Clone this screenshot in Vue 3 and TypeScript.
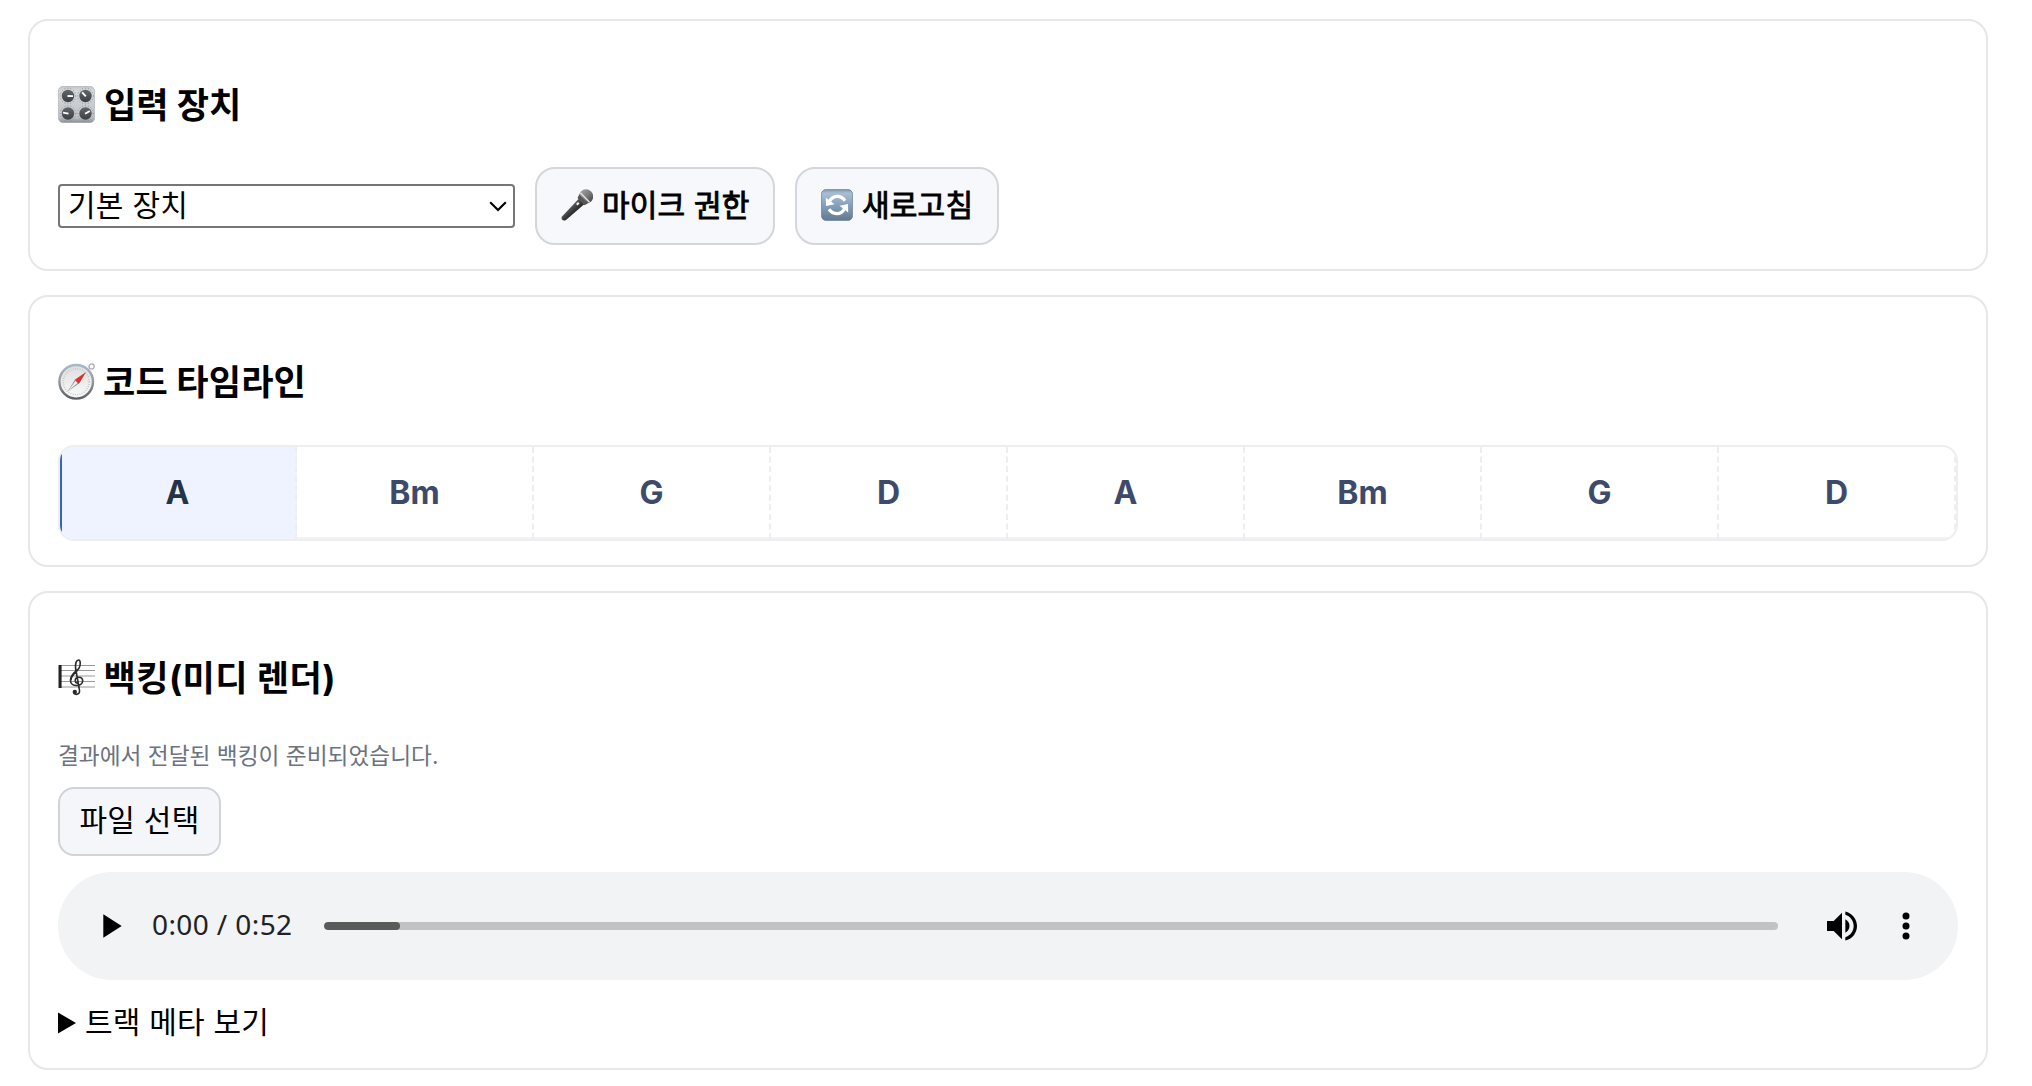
<script setup lang="ts">
import { ref } from 'vue'

const chords = ref<string[]>(['A', 'Bm', 'G', 'D', 'A', 'Bm', 'G', 'D'])
const activeIndex = ref(0)

interface Knob { x: number; y: number; angle: number }
const knobs: Knob[] = [
  { x: 10, y: 10, angle: 2 },
  { x: 27.5, y: 10, angle: 228 },
  { x: 10, y: 27.5, angle: 190 },
  { x: 27.5, y: 27.5, angle: -30 },
]
const staffLines = [6.5, 11.5, 17, 22.5, 28]
</script>

<template>
  <main class="page">
    <section class="card device-card">
      <h3 class="title">
        <svg class="emoji" viewBox="0 0 37 37" aria-hidden="true">
          <defs>
            <linearGradient id="panel" x1="0" y1="0" x2="0" y2="1">
              <stop offset="0" stop-color="#c3c6c9" />
              <stop offset=".12" stop-color="#d5d8da" />
              <stop offset=".85" stop-color="#bfc3c7" />
              <stop offset="1" stop-color="#8b8f94" />
            </linearGradient>
            <linearGradient id="dial" x1="0" y1="0" x2="0" y2="1">
              <stop offset="0" stop-color="#62666b" />
              <stop offset="1" stop-color="#3c4045" />
            </linearGradient>
          </defs>
          <rect x=".3" y=".3" width="36.4" height="36.4" rx="5" fill="url(#panel)" stroke="#a6a9ad" stroke-width=".6" />
          <g v-for="(k, i) in knobs" :key="i">
            <circle :cx="k.x" :cy="k.y" r="7.8" fill="none" stroke="#80858a" stroke-width="1" stroke-dasharray=".8 2.2" />
            <circle :cx="k.x" :cy="k.y" r="6.2" fill="url(#dial)" />
            <path d="M-.5 0H5" stroke="#fff" stroke-width="1.9" :transform="`translate(${k.x} ${k.y}) rotate(${k.angle})`" />
          </g>
        </svg>
        <span>입력 장치</span>
      </h3>
      <div class="controls">
        <div class="select">
          <span>기본 장치</span>
          <svg class="chevron" viewBox="0 0 18 11" aria-hidden="true"><path d="M1.2 1.2 9 9l7.8-7.8" fill="none" stroke="#000" stroke-width="2.1" /></svg>
        </div>
        <button class="btn mic-btn">
          <svg class="emoji-sm" viewBox="0 0 32 32" aria-hidden="true">
            <defs>
              <linearGradient id="handle" x1="0" y1="0" x2="1" y2="1">
                <stop offset=".25" stop-color="#777" />
                <stop offset=".55" stop-color="#333" />
                <stop offset="1" stop-color="#111" />
              </linearGradient>
              <linearGradient id="grille" x1="0" y1="0" x2="1" y2="1">
                <stop offset="0" stop-color="#aaa" />
                <stop offset=".55" stop-color="#777" />
                <stop offset="1" stop-color="#333" />
              </linearGradient>
            </defs>
            <path d="M18 9.5 23.5 15 5 31Q2.5 32.5.8 30.2.2 29 1 27.5Z" fill="url(#handle)" />
            <circle cx="25" cy="7.5" r="7.2" fill="url(#grille)" />
            <path d="m18.2 5.5 8.5 9-3.2 1.8-7-7.2Z" fill="#555" />
            <path d="m19.3 3.8 9.2 9.5" stroke="#ddd" stroke-width="1.6" />
            <path d="m15.8 15.8 2-2" stroke="#eee" stroke-width="2.2" />
          </svg>
          <span>마이크 권한</span>
        </button>
        <button class="btn refresh-btn">
          <svg class="emoji-sm" viewBox="0 0 32 32" aria-hidden="true">
            <defs>
              <linearGradient id="tile" x1="0" y1="0" x2="0" y2="1">
                <stop offset="0" stop-color="#7d93ab" />
                <stop offset=".12" stop-color="#a9bfd5" />
                <stop offset=".5" stop-color="#86a0bc" />
                <stop offset="1" stop-color="#62788f" />
              </linearGradient>
            </defs>
            <rect x=".4" y=".4" width="31.2" height="31.2" rx="5" fill="url(#tile)" stroke="#6f8399" stroke-width=".8" />
            <g fill="none" stroke="#fff" stroke-width="3.2">
              <path d="M8.2 12.8Q11 7.3 16.4 7.4q4.6.1 7.6 4.3" />
              <path d="M23.8 19.2Q21 24.7 15.6 24.6q-4.6-.1-7.6-4.3" />
            </g>
            <path d="M4.8 8.5 5 17l8.5-1.8ZM27.2 23.5 27 15l-8.5 1.8Z" fill="#fff" />
          </svg>
          <span>새로고침</span>
        </button>
      </div>
    </section>

    <section class="card timeline-card">
      <h3 class="title">
        <svg class="emoji" viewBox="0 0 37 37" aria-hidden="true">
          <defs>
            <linearGradient id="ring" x1="0" y1="0" x2="0" y2="1">
              <stop offset="0" stop-color="#a9b8c8" />
              <stop offset=".5" stop-color="#92979c" />
              <stop offset="1" stop-color="#5b6066" />
            </linearGradient>
            <linearGradient id="face" x1="0" y1="0" x2="0" y2="1">
              <stop offset="0" stop-color="#dedede" />
              <stop offset="1" stop-color="#fafafa" />
            </linearGradient>
          </defs>
          <circle cx="33.6" cy="3.4" r="2.6" fill="none" stroke="#a3a8b2" stroke-width="1.2" />
          <circle cx="18.2" cy="18.8" r="16.8" fill="url(#face)" stroke="url(#ring)" stroke-width="2.4" />
          <circle cx="18.2" cy="18.8" r="13" fill="none" stroke="#bbb" stroke-width="1.6" stroke-dasharray=".7 1.6" />
          <path d="M9.5 28.5 17 16.5l4 4Z" fill="#999" />
          <path d="m10 28 7.5-10 2 2Z" fill="#eee" />
          <path d="M28 9 16.8 16.8l4 4Z" fill="#ee2a2c" />
          <path d="M28 9 19.8 19.8l1 1Z" fill="#a9474b" />
        </svg>
        <span>코드 타임라인</span>
      </h3>
      <div class="timeline">
        <div v-for="(chord, i) in chords" :key="i" class="chord" :class="{ active: i === activeIndex }">{{ chord }}</div>
      </div>
    </section>

    <section class="card backing-card">
      <h3 class="title">
        <svg class="emoji" viewBox="0 0 37 37" aria-hidden="true">
          <path v-for="y in staffLines" :key="y" :d="`M1 ${y}H37`" stroke="#999" stroke-width="1" />
          <path d="M2.2 6v23" stroke="#222" stroke-width="2.8" />
          <path d="M.5 6v23" stroke="#777" stroke-width=".7" />
          <g fill="none" stroke="#2b2b2b" stroke-linecap="round">
            <path d="M20.9 28 17.6 9.5C17 4.5 18.5 1 20.5 1c2.3 0 2.3 5.5.3 8.5-2.5 3.8-8.3 7-8.3 12.2 0 6.5 12.2 6.3 12.2.3 0-5-7.5-5-7.5-.5 0 1.5.8 2.4 2 2.8" stroke-width="1.6" />
            <path d="M12.8 20.5c.1-4 4-7.2 6.2-9.2" stroke-width="2" />
            <path d="M20.9 28 21.6 32c0 3.8-5.1 4.5-5.6 1.8" stroke-width="1.5" />
          </g>
          <circle cx="16.8" cy="33" r="2.2" fill="#2b2b2b" />
        </svg>
        <span>백킹(미디 렌더)</span>
      </h3>
      <p class="hint">결과에서 전달된 백킹이 준비되었습니다.</p>
      <button class="file-btn">파일 선택</button>
      <div class="player">
        <svg class="ctl" viewBox="0 0 24 24" aria-label="재생"><path d="M8 5v14l11-7z" /></svg>
        <span class="time">0:00 / 0:52</span>
        <div class="track"><div class="buffered"></div></div>
        <svg class="ctl" viewBox="0 0 24 24" aria-label="음량"><path d="M3 9v6h4l5 5V4L7 9H3zm13.5 3c0-1.77-1.02-3.29-2.5-4.03v8.05c1.48-.73 2.5-2.25 2.5-4.02zM14 3.23v2.06c2.89.86 5 3.54 5 6.71s-2.11 5.85-5 6.71v2.06c4.01-.91 7-4.49 7-8.77s-2.99-7.86-7-8.77z" /></svg>
        <svg class="ctl more" viewBox="0 0 24 24" aria-label="더보기"><circle cx="12" cy="6" r="2.1" /><circle cx="12" cy="12" r="2.1" /><circle cx="12" cy="18" r="2.1" /></svg>
      </div>
      <div class="summary">
        <svg class="marker" viewBox="0 0 18 22" aria-hidden="true"><path d="M0 .5v21L18 11z" /></svg>
        <span>트랙 메타 보기</span>
      </div>
    </section>
  </main>
</template>

<style>
body {
  margin: 0;
  background: #fff;
}
</style>

<style scoped>
.page {
  box-sizing: border-box;
  width: 2032px;
  height: 1086px;
  overflow: hidden;
  padding: 19px 44px 0 28px;
  display: flex;
  flex-direction: column;
  gap: 24px;
  font-family: Inter, "Noto Sans CJK KR", sans-serif;
  font-size: 30px;
  line-height: 45px;
  color: #000;
}
.card {
  box-sizing: border-box;
  flex: none;
  height: 252px;
  padding: 24px 28px;
  border: 2px solid #e7e7e7;
  border-radius: 20px;
}
.timeline-card {
  height: 272px;
}
.backing-card {
  height: 479px;
}
.title {
  display: flex;
  align-items: center;
  gap: 9px;
  height: 52px;
  margin: 35px 0;
  font-size: 35.1px;
  font-weight: 700;
  white-space: nowrap;
}
.device-card .title {
  margin: 34px 0 36px;
}
.timeline-card .title {
  gap: 8px;
  letter-spacing: 0.15px;
}
.backing-card .title {
  gap: 8.5px;
  letter-spacing: 0.45px;
}
.emoji {
  width: 37px;
  height: 37px;
  flex: none;
  margin-top: -1px;
}
.emoji-sm {
  width: 32px;
  height: 32px;
  flex: none;
}
.controls {
  display: flex;
  align-items: center;
  gap: 20px;
}
.select {
  box-sizing: border-box;
  display: flex;
  align-items: center;
  justify-content: space-between;
  width: 457px;
  height: 44px;
  padding: 0 6px 2px 8px;
  border: 2px solid #767676;
  border-radius: 4px;
  letter-spacing: 0.25px;
}
.chevron {
  width: 18px;
  height: 11px;
  margin-top: 2px;
}
.btn {
  box-sizing: border-box;
  display: flex;
  align-items: center;
  gap: 9px;
  height: 78px;
  padding: 0 0 2px 24px;
  border: 2px solid #d4d6dd;
  border-radius: 20px;
  background: #f7f8fc;
  color: #000;
  font: inherit;
  letter-spacing: 0.2px;
  -webkit-text-stroke: 0.9px #000;
  white-space: nowrap;
}
.mic-btn {
  width: 240px;
}
.refresh-btn {
  width: 204px;
}
.timeline {
  box-sizing: border-box;
  display: flex;
  height: 96px;
  margin-top: 37px;
  border: 2px solid #eee;
  border-radius: 16px;
  overflow: hidden;
}
.chord {
  box-sizing: border-box;
  flex: 1;
  display: flex;
  align-items: center;
  justify-content: center;
  padding-bottom: 2px;
  border-right: 2px dashed #eee;
  box-shadow: inset 0 -2px 0 #f1f2f7;
  color: #3d4a6b;
  font-size: 32px;
  font-weight: 700;
}
.chord.active {
  background: #eff3ff;
  color: #243447;
  box-shadow: inset 2px 0 0 #3367b1;
}
.hint {
  margin: 0;
  height: 48px;
  line-height: 33px;
  font-size: 22.7px;
  color: #6b7280;
}
.file-btn {
  box-sizing: border-box;
  display: block;
  width: 163px;
  height: 69px;
  padding: 0 0 2px;
  border: 2px solid #d0d3da;
  border-radius: 16px;
  background: #f5f6f9;
  color: #000;
  font: inherit;
  letter-spacing: 0.25px;
}
.player {
  box-sizing: border-box;
  display: flex;
  align-items: center;
  height: 108px;
  margin-top: 16px;
  padding: 0 32px;
  border-radius: 54px;
  background: #f1f3f4;
}
.ctl {
  width: 40px;
  height: 40px;
  flex: none;
}
.time {
  width: 171px;
  margin-left: 22px;
  padding-bottom: 4px;
  flex: none;
  font-family: "Noto Sans", sans-serif;
  font-size: 28px;
  letter-spacing: 0.4px;
  color: #202124;
  white-space: nowrap;
}
.track {
  flex: 1;
  height: 8px;
  margin: 0 44px 0 1px;
  border-radius: 4px;
  background: #c0c2c3;
  overflow: hidden;
}
.buffered {
  width: 76px;
  height: 8px;
  border-radius: 4px;
  background: #595b5b;
}
.more {
  margin-left: 24px;
}
.summary {
  display: flex;
  align-items: center;
  gap: 9px;
  height: 45px;
  margin-top: 20px;
  letter-spacing: 0.2px;
}
.marker {
  width: 18px;
  height: 22px;
}
</style>
